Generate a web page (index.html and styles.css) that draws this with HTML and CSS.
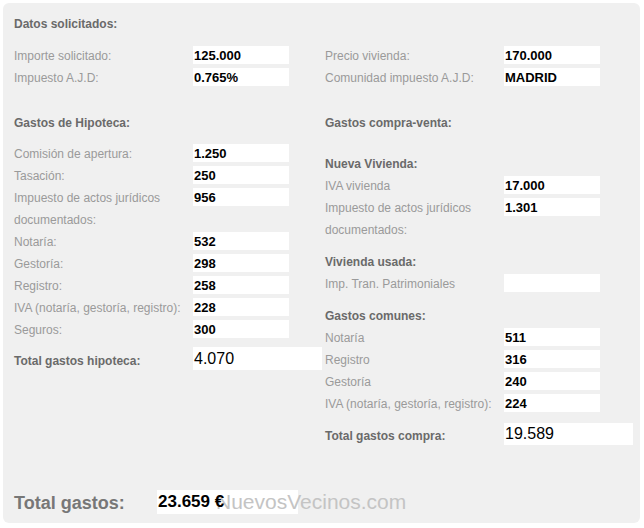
FILE: index.html
```html
<!DOCTYPE html>
<html lang="es">
<head>
<meta charset="utf-8">
<title>Gastos hipoteca</title>
<link rel="stylesheet" href="styles.css">
</head>
<body>
<div class="panel">
  <div class="cols">
    <div class="col">
      <div class="head">Datos solicitados:</div>
      <div class="row first"><span class="lbl">Importe solicitado:</span><span class="val">125.000</span></div>
      <div class="row"><span class="lbl">Impuesto A.J.D:</span><span class="val">0.765%</span></div>
      <div class="head sect">Gastos de Hipoteca:</div>
      <div class="row after-sect"><span class="lbl">Comisión de apertura:</span><span class="val">1.250</span></div>
      <div class="row"><span class="lbl">Tasación:</span><span class="val">250</span></div>
      <div class="row"><span class="lbl">Impuesto de actos jurídicos documentados:</span><span class="val">956</span></div>
      <div class="row"><span class="lbl">Notaría:</span><span class="val">532</span></div>
      <div class="row"><span class="lbl">Gestoría:</span><span class="val">298</span></div>
      <div class="row"><span class="lbl">Registro:</span><span class="val">258</span></div>
      <div class="row"><span class="lbl">IVA (notaría, gestoría, registro):</span><span class="val">228</span></div>
      <div class="row"><span class="lbl">Seguros:</span><span class="val">300</span></div>
      <div class="total total-left"><span class="tlbl">Total gastos hipoteca:</span><span class="tval">4.070</span></div>
    </div>
    <div class="col">
      <div class="row first-right"><span class="lbl">Precio vivienda:</span><span class="val">170.000</span></div>
      <div class="row"><span class="lbl">Comunidad impuesto A.J.D:</span><span class="val">MADRID</span></div>
      <div class="head sect">Gastos compra-venta:</div>
      <div class="head sub-first">Nueva Vivienda:</div>
      <div class="row"><span class="lbl">IVA vivienda</span><span class="val">17.000</span></div>
      <div class="row"><span class="lbl">Impuesto de actos jurídicos documentados:</span><span class="val">1.301</span></div>
      <div class="head sub">Vivienda usada:</div>
      <div class="row"><span class="lbl">Imp. Tran. Patrimoniales</span><span class="val"></span></div>
      <div class="head sub">Gastos comunes:</div>
      <div class="row"><span class="lbl">Notaría</span><span class="val">511</span></div>
      <div class="row"><span class="lbl">Registro</span><span class="val">316</span></div>
      <div class="row"><span class="lbl">Gestoría</span><span class="val">240</span></div>
      <div class="row"><span class="lbl">IVA (notaría, gestoría, registro):</span><span class="val">224</span></div>
      <div class="total total-right"><span class="tlbl">Total gastos compra:</span><span class="tval">19.589</span></div>
    </div>
  </div>
  <div class="footer">
    <span class="flbl">Total gastos:</span>
    <span class="fbox"><span class="fval">23.659 €</span><span class="mark">NuevosVecinos.com</span></span>
  </div>
</div>
</body>
</html>
```
FILE: styles.css
```css
html, body {
  margin: 0;
  padding: 0;
  background: #ffffff;
}
body {
  font-family: "Liberation Sans", Arial, sans-serif;
  font-size: 12px;
}
.panel {
  margin: 3px 0 0 3px;
  width: 637px;
  height: 520px;
  box-sizing: border-box;
  background: #f0f0f0;
  border-radius: 6px;
  padding: 10px 0 9px 11px;
  display: flex;
  flex-direction: column;
}
.cols {
  display: grid;
  grid-template-columns: 311px 1fr;
}
.col {
  display: flex;
  flex-direction: column;
}
.head {
  height: 22px;
  line-height: 22px;
  font-weight: bold;
  color: #6a6a6a;
}
.head.sect { margin-top: 23px; }
.head.sub-first { margin-top: 19px; }
.head.sub { margin-top: 10px; }
.row {
  display: flex;
  align-items: flex-start;
}
.row.first { margin-top: 10px; }
.row.first-right { margin-top: 32px; }
.row.after-sect { margin-top: 9px; }
.lbl {
  width: 179px;
  line-height: 22px;
  color: #9a9a9a;
}
.val {
  margin-top: 1px;
  width: 95px;
  height: 18px;
  line-height: 19px;
  background: #ffffff;
  padding-left: 1px;
  font-weight: bold;
  font-size: 13px;
  color: #000;
}
.total {
  display: flex;
  align-items: center;
}
.total-left { margin-top: 8px; }
.total-right { margin-top: 9px; }
.tlbl {
  width: 179px;
  font-weight: bold;
  color: #6a6a6a;
  padding-top: 3px;
}
.tval {
  width: 128px;
  height: 23px;
  line-height: 24px;
  background: #ffffff;
  padding-left: 1px;
  font-size: 16px;
  color: #000;
}
.total-left .tval { margin-top: -2px; }
.total-right .tval { height: 22px; line-height: 22px; margin-top: -1px; }
.footer {
  margin-top: auto;
  display: flex;
  align-items: center;
  height: 24px;
}
.flbl {
  width: 143px;
  font-size: 18px;
  font-weight: bold;
  color: #777;
  padding-top: 2px;
}
.fbox {
  position: relative;
  width: 140px;
  height: 24px;
  line-height: 24px;
  background: #ffffff;
  padding-left: 1px;
}
.fval {
  position: relative;
  z-index: 1;
  font-size: 17px;
  font-weight: bold;
  color: #000;
}
.mark {
  position: absolute;
  left: 59px;
  top: 0;
  line-height: 24px;
  font-size: 21px;
  color: #c4c4c4;
  white-space: nowrap;
}
```
